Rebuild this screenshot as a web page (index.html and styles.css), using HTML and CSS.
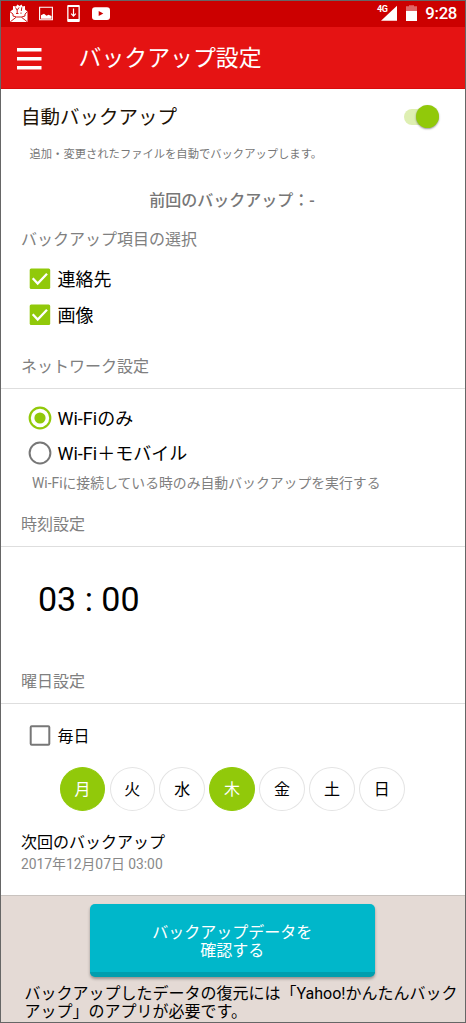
FILE: index.html
```html
<!DOCTYPE html>
<html lang="ja">
<head>
<meta charset="utf-8">
<title>バックアップ設定</title>
<link rel="stylesheet" href="styles.css">
</head>
<body>
<div class="screen">
  <div class="status">
    <svg class="notifications" width="112" height="26" viewBox="0 0 112 26">
      <path fill="#fff" d="M10 10.500V21h17.500V10.500L25 8.500V5l-2.500.5-1-2-2 1.500-2-1.500-1.500 2-3-.5v3.500z"/>
      <path fill="none" stroke="#c00" stroke-width=".9" d="M10 10.700l3 2.300v2l3.500 1h5l3.500-1v-2l2.500-2.300M10.300 20.800l5.700-4.500M27.300 20.800L21.500 16.300M15.500 6.500l1.700 2.800L19 6.500M17.200 9.300v3.200M16 12.500h2.500M21.800 6.300l-.5 3.700M21 11.500v1.300"/>
      <path fill="none" stroke="#fff" stroke-width="1.100" d="M39.600 6.300h12.800v12.500H39.600z"/>
      <path fill="#fff" d="M41 17.700v-3.500l3-1.500 2.500 2 2-1 3 1.300v2.700z"/>
      <path fill="#fff" fill-rule="evenodd" d="M68.200 4h10.600a1 1 0 0 1 1 1v15a1 1 0 0 1-1 1H68.200a1 1 0 0 1-1-1V5a1 1 0 0 1 1-1zM68.500 6v12h10V6z"/>
      <path fill="none" stroke="#fff" stroke-width="1.200" d="M73.500 7.500v7.500M71.200 12.700l2.300 2.500 2.300-2.500"/>
      <rect x="92" y="6.300" width="18" height="12.800" rx="3" fill="#fff"/>
      <path fill="#c00" d="M98.700 9.900v5l4.600-2.500z"/>
    </svg>
    <div class="indicators">
      <span class="lte">4G</span>
      <svg width="36" height="26" viewBox="0 0 36 26">
        <path fill="#fff" d="M0 19.800L16 4.800v15z"/>
        <path fill="#e06666" d="M25 5.200h3V4.300h5v.9h3V10H25z"/>
        <path fill="#fff" d="M25 10h11v10H25z"/>
      </svg>
      <span class="clock">9:28</span>
    </div>
  </div>
  <header class="appbar">
    <svg class="menu" width="25" height="22" viewBox="0 0 25 22"><path fill="#fff" d="M0 0h24.500v3.500H0zM0 9h24.500v3.500H0zM0 18h24.500v3.500H0z"/></svg>
    <h1 class="title">バックアップ設定</h1>
  </header>
  <main class="settings">
    <div class="auto">
      <span class="auto-label">自動バックアップ</span>
      <span class="switch"><span class="knob"></span></span>
    </div>
    <p class="description">追加・変更されたファイルを自動でバックアップします。</p>
    <p class="previous">前回のバックアップ：-</p>
    <h2 class="heading">バックアップ項目の選択</h2>
    <div class="options items">
      <div class="option"><svg class="mark" width="24" height="24" viewBox="0 0 24 24"><rect x="1.700" y="1.500" width="20.500" height="20.500" rx="1.500" fill="#91c90a"/><path d="M4.700 11.200l5 5.300L19 6.700" fill="none" stroke="#fff" stroke-width="2.300"/></svg><span>連絡先</span></div>
      <div class="option"><svg class="mark" width="24" height="24" viewBox="0 0 24 24"><rect x="1.700" y="1.500" width="20.500" height="20.500" rx="1.500" fill="#91c90a"/><path d="M4.700 11.200l5 5.300L19 6.700" fill="none" stroke="#fff" stroke-width="2.300"/></svg><span>画像</span></div>
    </div>
    <h2 class="heading ruled network-heading">ネットワーク設定</h2>
    <div class="options network">
      <div class="option"><svg class="mark" width="24" height="24" viewBox="0 0 24 24"><circle cx="12" cy="12" r="10.300" fill="none" stroke="#91c90a" stroke-width="2.200"/><circle cx="12" cy="12" r="5.600" fill="#91c90a"/></svg><span>Wi-Fiのみ</span></div>
      <div class="option"><svg class="mark" width="24" height="24" viewBox="0 0 24 24"><circle cx="12" cy="12" r="10.400" fill="none" stroke="#777" stroke-width="2"/></svg><span>Wi-Fi＋モバイル</span></div>
    </div>
    <p class="note">Wi-Fiに接続している時のみ自動バックアップを実行する</p>
    <h2 class="heading ruled time-heading">時刻設定</h2>
    <div class="time">03 : 00</div>
    <h2 class="heading ruled day-heading">曜日設定</h2>
    <div class="option daily"><svg class="mark" width="24" height="24" viewBox="0 0 24 24"><rect x="2.700" y="2.200" width="18.600" height="18.600" rx="1" fill="none" stroke="#777" stroke-width="2"/></svg><span>毎日</span></div>
    <div class="days">
      <span class="day on">月</span><span class="day">火</span><span class="day">水</span><span class="day on">木</span><span class="day">金</span><span class="day">土</span><span class="day">日</span>
    </div>
    <p class="next">次回のバックアップ</p>
    <p class="date">2017年12月07日 03:00</p>
  </main>
  <footer class="footer">
    <div class="confirm">バックアップデータを<br>確認する</div>
    <p class="notice">バックアップしたデータの復元には「Yahoo!かんたんバック<br>アップ」のアプリが必要です。</p>
  </footer>
</div>
</body>
</html>
```
FILE: styles.css
```css
* { box-sizing: border-box; }
body { margin: 0; font-family: Roboto, "Noto Sans CJK JP", sans-serif; color: #000; }
h1, h2, p { margin: 0; font-weight: 400; }
svg { display: block; flex: none; }
.screen { width: 466px; height: 1023px; border: 1px solid #666; display: flex; flex-direction: column; background: #fff; overflow: hidden; white-space: nowrap; }
.status { height: 26px; background: #c00; display: flex; justify-content: space-between; color: #fff; flex: none; }
.notifications { margin-left: -1px; }
.indicators { display: flex; align-items: flex-start; padding-right: 8px; }
.lte { font-size: 9px; font-weight: 700; line-height: 10px; letter-spacing: -.5px; margin: 3px -6px 0 0; }
.indicators svg { margin-right: 8px; }
.clock { font-size: 16.700px; font-weight: 500; line-height: 26px; letter-spacing: -.3px; }
.appbar { height: 62px; background: #e51313; border-bottom: 1px solid #d80c0c; display: flex; align-items: center; flex: none; padding: 2px 0 0 15.500px; color: #fff; }
.title { font-size: 22.900px; line-height: 58px; margin-left: 37px; }
.settings { height: 806px; flex: none; }
.auto { height: 55px; padding: 0 26px 0 20px; display: flex; justify-content: space-between; align-items: center; }
.auto-label { font-size: 19.500px; color: #1d1205; padding-bottom: 2px; }
.switch { width: 35.500px; height: 16px; border-radius: 8px; background: #deefb2; display: flex; justify-content: flex-end; align-items: center; }
.knob { width: 23px; height: 23px; flex: none; border-radius: 50%; background: #91c90a; box-shadow: 0 1px 2px #0006; }
.description { margin-top: 1px; height: 20px; line-height: 20px; padding-left: 28.500px; font-size: 11.300px; color: #777; }
.previous { margin-top: 26px; height: 20px; line-height: 20px; padding-right: 2px; text-align: center; font-size: 16px; font-weight: 500; color: #777; }
.heading { margin-top: 19px; height: 20px; line-height: 20px; padding-left: 20px; font-size: 16px; color: #808080; }
.ruled { height: 32px; border-bottom: 1px solid #dedede; }
.options { display: flex; flex-direction: column; }
.option { height: 36px; display: flex; align-items: center; padding-left: 26.500px; gap: 6px; font-size: 18px; }
.option span { padding-bottom: 2px; }
.items { padding-top: 11px; }
.network-heading { margin-top: 24px; }
.network { padding-top: 11px; }
.network .option { height: 35.500px; }
.note { height: 20px; line-height: 20px; padding-left: 31px; font-size: 13.850px; color: #808080; margin-top: 1.500px; }
.time-heading { margin-top: 22.500px; }
.time { height: 104px; line-height: 104px; padding-left: 37px; font-size: 34px; }
.day-heading { margin-top: 21px; }
.daily { margin-top: 13.500px; font-size: 16px; }
.days { display: flex; gap: 4.400px; padding: 13.300px 0 0 58.700px; }
.day { width: 45.500px; height: 44.300px; border: 1px solid #e4e4e4; border-radius: 50%; text-align: center; line-height: 43px; font-size: 16px; }
.on { background: #91c90a; border-color: #91c90a; color: #fff; }
.next { margin-top: 21px; padding-left: 20px; font-size: 16px; line-height: 22px; }
.date { padding-left: 20px; font-size: 13.850px; line-height: 21px; color: #888; }
.footer { flex: 1; background: #e4dad5; border-top: 1px solid #c9c3bf; padding-top: 8px; }
.confirm { width: 284.500px; height: 73px; margin: 0 0 0 89px; border-radius: 5px; background: #00b7ca; border-bottom: 5px solid #009eae; box-shadow: 0 2px 3px #0005; color: #fff; text-align: center; font-size: 16px; line-height: 18px; padding-top: 20px; }
.notice { margin-top: 8px; padding-left: 23.500px; font-size: 16px; line-height: 18px; }
```
